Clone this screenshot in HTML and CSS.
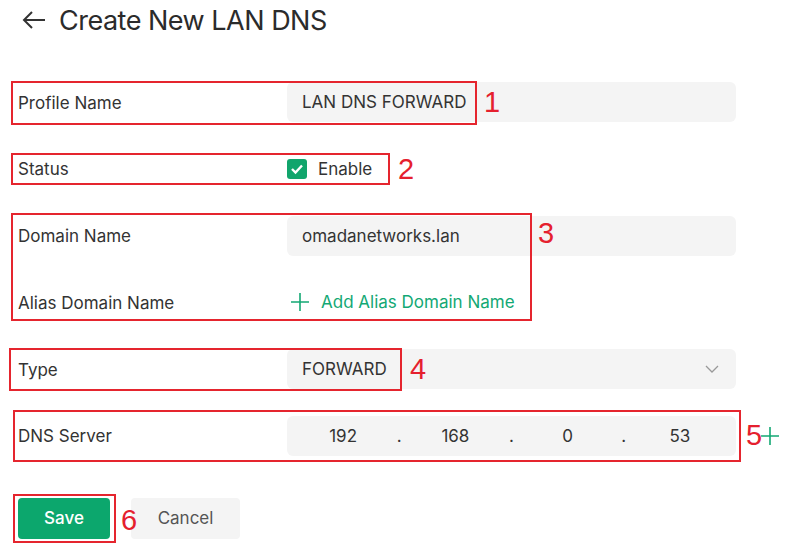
FILE: index.html
```html
<!DOCTYPE html>
<html lang="en">
<head>
  <meta charset="UTF-8" />
  <title>Create New LAN DNS</title>
  <meta name="viewport" content="width=device-width, initial-scale=1" />
  <link rel="stylesheet" href="styles.css">
</head>
<body>
  <header class="page-head">
    <svg class="back" width="24" height="18" viewBox="0 0 24 18">
      <path d="M23 9H2M10 1L2 9l8 8" fill="none" stroke="#333" stroke-width="2" />
    </svg>
    <h1>Create New LAN DNS</h1>
  </header>

  <form class="dns-form">
    <div class="row">
      <label>Profile Name</label>
      <div class="field">LAN DNS FORWARD</div>
    </div>
    <div class="row">
      <label>Status</label>
      <div class="check">
        <span class="box">
          <svg width="14" height="12" viewBox="0 0 14 12"><path d="M2 6l3.5 3.5L12 2.5" fill="none" stroke="#fff" stroke-width="2.4" /></svg>
        </span>
        Enable
      </div>
    </div>
    <div class="row">
      <label>Domain Name</label>
      <div class="field">omadanetworks.lan</div>
    </div>
    <div class="row">
      <label>Alias Domain Name</label>
      <div class="add-link">
        <svg width="20" height="20" viewBox="0 0 20 20"><path d="M10 1v18M1 10h18" stroke="#13a874" stroke-width="1.6" /></svg>
        Add Alias Domain Name
      </div>
    </div>
    <div class="row">
      <label>Type</label>
      <div class="field select">
        FORWARD
        <svg width="14" height="8" viewBox="0 0 14 8"><path d="M1 1l6 6 6-6" fill="none" stroke="#999" stroke-width="1.3" /></svg>
      </div>
    </div>
    <div class="row">
      <label>DNS Server</label>
      <div class="field ip">
        <span>192</span><i>.</i><span>168</span><i>.</i><span>0</span><i>.</i><span>53</span>
      </div>
      <svg class="add-server" width="18" height="18" viewBox="0 0 18 18"><path d="M9 0v18M0 9h18" stroke="#13a874" stroke-width="1.6" /></svg>
    </div>
    <div class="actions">
      <button type="button" class="btn save">Save</button>
      <button type="button" class="btn cancel">Cancel</button>
    </div>
  </form>

  <!-- annotation marks -->
  <div class="mark m1"></div><span class="num n1">1</span>
  <div class="mark m2"></div><span class="num n2">2</span>
  <div class="mark m3"></div><span class="num n3">3</span>
  <div class="mark m4"></div><span class="num n4">4</span>
  <div class="mark m5"></div><span class="num n5">5</span>
  <div class="mark m6"></div><span class="num n6">6</span>
</body>
</html>
```

FILE: styles.css
```css
body {
  margin: 0;
  font-family: Inter, "Noto Sans", sans-serif;
  color: #333;
  background: #fff;
  position: relative;
  width: 795px;
  height: 546px;
  overflow: hidden;
}
.page-head {
  display: flex;
  align-items: center;
  height: 40px;
  padding-left: 22px;
}
.page-head .back {
  margin-right: 13px;
}
.page-head h1 {
  margin: 0;
  font-size: 27px;
  font-weight: 400;
  color: #2b2b2b;
  letter-spacing: -0.5px;
}
.dns-form {
  margin-top: 42px;
  padding-left: 18px;
  display: flex;
  flex-direction: column;
  gap: 26.8px;
}
.row {
  display: grid;
  grid-template-columns: 269px 449px auto;
  align-items: center;
  height: 40px;
  font-size: 17px;
}
.row label {
  padding-top: 1px;
}
.field {
  background: #f4f4f4;
  border-radius: 6px;
  height: 40px;
  display: flex;
  align-items: center;
  padding: 0 15px;
  box-sizing: border-box;
}
.field.select {
  justify-content: space-between;
  padding-right: 17px;
}
.field.ip {
  display: grid;
  grid-template-columns: 1fr 0 1fr 0 1fr 0 1fr;
  padding: 0;
  text-align: center;
}
.field.ip i {
  font-style: normal;
  display: flex;
  justify-content: center;
  width: 0;
}
.check {
  display: flex;
  align-items: center;
  gap: 11px;
}
.check .box {
  width: 20px;
  height: 20px;
  background: #11a56c;
  border-radius: 3px;
  display: flex;
  align-items: center;
  justify-content: center;
}
.add-link {
  display: flex;
  align-items: center;
  gap: 11px;
  padding-left: 3px;
  color: #13a874;
}
.add-server {
  margin-left: 25px;
}
.actions {
  display: flex;
  gap: 21px;
  margin-top: 15px;
}
.btn {
  height: 41px;
  border: none;
  border-radius: 4px;
  font-family: Inter, "Noto Sans", sans-serif;
  font-size: 17px;
}
.btn.save {
  width: 92px;
  background: #0ca76d;
  color: #fff;
  font-weight: 500;
}
.btn.cancel {
  width: 109px;
  background: #f4f4f4;
  color: #555;
}
.mark {
  position: absolute;
  border: 2px solid #e5252e;
  box-sizing: border-box;
}
.m1 { left: 11px; top: 81px; width: 466px; height: 44px; }
.m2 { left: 11px; top: 153px; width: 379px; height: 32px; }
.m3 { left: 11px; top: 213px; width: 521px; height: 108px; }
.m4 { left: 9px; top: 348px; width: 393px; height: 43px; }
.m5 { left: 13px; top: 410px; width: 728px; height: 52px; }
.m6 { left: 13px; top: 494px; width: 103px; height: 49px; }
.num {
  position: absolute;
  font-family: "Liberation Sans", sans-serif;
  font-size: 29px;
  line-height: 1;
  color: #e5202e;
}
.n1 { left: 484px; top: 88px; }
.n2 { left: 398px; top: 155px; }
.n3 { left: 538px; top: 219px; }
.n4 { left: 410px; top: 355px; }
.n5 { left: 746px; top: 421px; }
.n6 { left: 121px; top: 506px; }
```
